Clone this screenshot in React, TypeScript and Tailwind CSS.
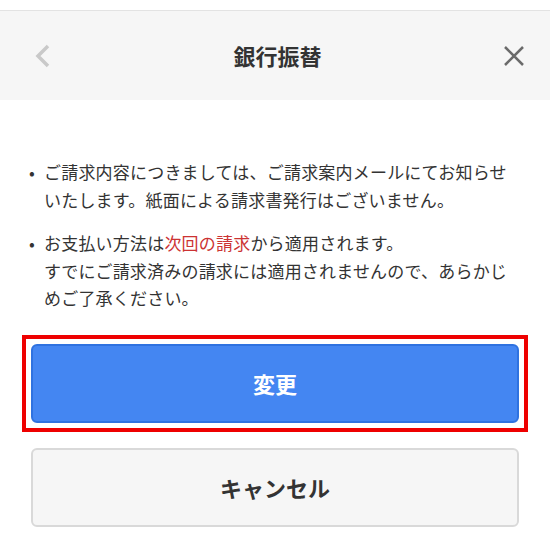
import React from 'react';

const font = { fontFamily: '"Noto Sans CJK JP", "Noto Sans", sans-serif' };

const Notes = () => {
  return (
    <ul className="pl-[29px] pr-[36px] space-y-[16px] text-[17px] tracking-[0.2px] leading-[27.5px] text-[#333333]">
      <li className="flex">
        <span className="w-[15px] shrink-0">•</span>
        <span>ご請求内容につきましては、ご請求案内メールにてお知らせいたします。紙面による請求書発行はございません。</span>
      </li>
      <li className="flex">
        <span className="w-[15px] shrink-0">•</span>
        <span>
          お支払い方法は<span className="text-[#cc3333]">次回の請求</span>から適用されます。
          <br />
          すでにご請求済みの請求には適用されませんので、あらかじめご了承ください。
        </span>
      </li>
    </ul>
  );
};

const App = () => {
  return (
    <div className="w-[550px] h-[544px] bg-white overflow-hidden" style={font}>
      <header className="mt-[10px] h-[90px] border-t border-[#e3e3e3] bg-[#f6f6f6] flex items-center justify-between pl-[33px] pr-[24px]">
        <svg width="20" height="24" viewBox="0 0 20 24" fill="none">
          <path d="M15 2 L5 12 L15 22" stroke="#c9c9c9" strokeWidth="3.5" />
        </svg>
        <h1 className="text-[22px] font-bold text-[#333333]">銀行振替</h1>
        <svg width="24" height="24" viewBox="0 0 24 24" fill="none">
          <path d="M3 3 L21 21 M21 3 L3 21" stroke="#6b6b6b" strokeWidth="2.5" />
        </svg>
      </header>

      <div className="pt-[58px]">
        <Notes />
      </div>

      <div className="px-[31px] pt-[32px] flex flex-col gap-[25px]">
        <div className="-m-[9px] p-[5px] border-4 border-[#ee0000]">
          <button className="block h-[79px] w-full rounded-[6px] border-2 border-[#2f72e0] bg-[#4486f2] text-white text-[22px] font-bold">
            変更
          </button>
        </div>
        <button className="h-[79px] w-full rounded-[6px] border-2 border-[#d9d9d9] bg-[#f6f6f6] text-[#333333] text-[22px] font-bold">
          キャンセル
        </button>
      </div>
    </div>
  );
};

export default App;
